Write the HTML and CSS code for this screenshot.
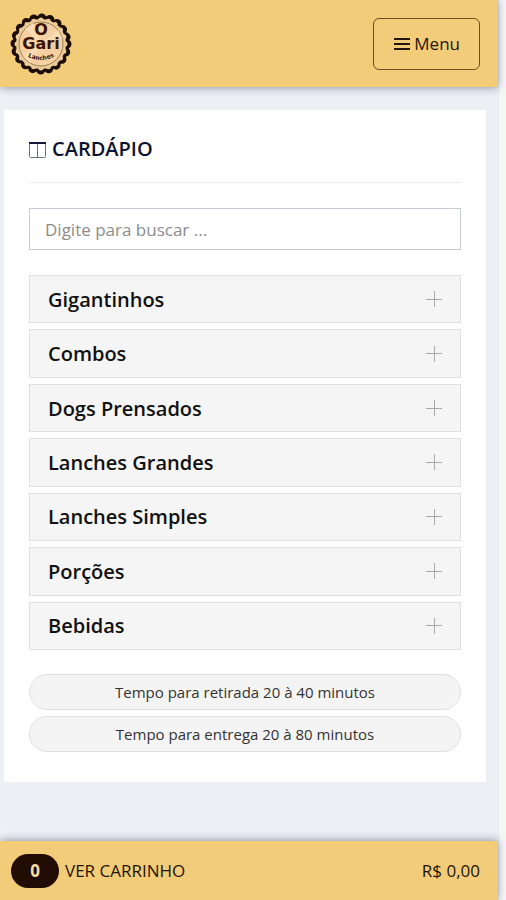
FILE: index.html
```html
<!DOCTYPE html>
<html lang="pt-BR">
<head>
    <meta charset="UTF-8">
    <meta name="viewport" content="width=device-width, initial-scale=1.0">
    <title>O Gari Lanches</title>
    <link rel="stylesheet" href="styles.css">
</head>
<body>
    <div class="page">
        <header class="header">
            <a href="#" class="logo" aria-label="O Gari Lanches">
                <svg width="62" height="62" viewBox="0 0 62 62">
                    <!-- Scalloped seal -->
                    <circle class="scallop" cx="31" cy="31" r="26" stroke="#1c0d06" stroke-width="9"/>
                    <circle cx="31" cy="31" r="28" fill="#1c0d06"/>
                    <circle class="scallop" cx="31" cy="31" r="24" stroke="#eccb95" stroke-width="5" pathLength="163.4"/>
                    <circle cx="31" cy="31" r="25" fill="#eccb95"/>
                    <circle cx="31" cy="31" r="22" fill="#f6d0a0" stroke="#99805a" stroke-width="1"/>
                    <path d="M31 31L15 16L23 10ZM31 31L48 17L52 25ZM31 31L13 43L20 50Z" fill="#f9dcb4"/>
                    <path id="arc" d="M15 42Q31 52 47 42" fill="none"/>
                    <text class="logo-name" x="31" y="22">O</text>
                    <text class="logo-name" x="31" y="36">Gari</text>
                    <text class="logo-sub"><textPath href="#arc" startOffset="50%">Lanches</textPath></text>
                </svg>
            </a>
            <button type="button" class="menu-button">
                <svg width="16" height="14" viewBox="0 0 16 14">
                    <path d="M0 2H16M0 7H16M0 12H16" stroke="#24150a" stroke-width="2"/>
                </svg>
                Menu
            </button>
        </header>

        <main class="content">
            <section class="card">
                <h1 class="title">
                    <svg width="18" height="18" viewBox="0 0 18 18" fill="none">
                        <rect x="0.5" y="2.5" width="16" height="15" rx="1" stroke="#6b7080"/>
                        <path d="M8.5 3V17" stroke="#6b7080"/>
                        <path d="M0 3H17" stroke="#14193a" stroke-width="2"/>
                    </svg>
                    CARDÁPIO
                </h1>

                <input type="search" class="search" placeholder="Digite para buscar ..." aria-label="Digite para buscar">

                <div class="categories">
                    <button type="button" class="category">Gigantinhos <span class="plus"></span></button>
                    <button type="button" class="category">Combos <span class="plus"></span></button>
                    <button type="button" class="category">Dogs Prensados <span class="plus"></span></button>
                    <button type="button" class="category">Lanches Grandes <span class="plus"></span></button>
                    <button type="button" class="category">Lanches Simples <span class="plus"></span></button>
                    <button type="button" class="category">Porções <span class="plus"></span></button>
                    <button type="button" class="category">Bebidas <span class="plus"></span></button>
                </div>

                <div class="times">
                    <p class="time">Tempo para retirada 20 à 40 minutos</p>
                    <p class="time">Tempo para entrega 20 à 80 minutos</p>
                </div>
            </section>
        </main>

        <footer class="cart">
            <a href="#" class="cart-link"><span class="cart-count">0</span> VER CARRINHO</a>
            <span>R$ 0,00</span>
        </footer>
    </div>
</body>
</html>
```
FILE: styles.css
```css
* {
    box-sizing: border-box;
}

body {
    margin: 0;
    padding-right: 7px;
    font-family: "Open Sans", sans-serif;
    color: #24150a;
    background: #f6f6f7;
}

.page {
    display: flex;
    flex-direction: column;
    min-height: 100vh;
    background: #ecf0f4;
    border-right: 1px solid #e6e9ec;
}

.header {
    display: flex;
    align-items: center;
    justify-content: space-between;
    height: 87px;
    padding: 0 18px 0 10px;
    background: #f2cc79;
    box-shadow: 0 1px 8px rgba(40, 45, 80, 0.45);
}

.logo svg {
    display: block;
}

.scallop {
    fill: none;
    stroke-linecap: round;
    stroke-dasharray: 0 8.17;
}

.logo-name {
    font-family: "DejaVu Sans", Verdana, sans-serif;
    font-size: 16px;
    font-weight: bold;
    text-anchor: middle;
    fill: #3a1408;
}

.logo-sub {
    font-family: "DejaVu Sans", Verdana, sans-serif;
    font-size: 6px;
    font-weight: bold;
    text-anchor: middle;
    fill: #3a1408;
}

.menu-button {
    display: flex;
    align-items: center;
    gap: 4px;
    height: 52px;
    padding: 0 19px 0 20px;
    font: 17px "Open Sans", sans-serif;
    color: #24150a;
    background: none;
    border: 1px solid #6b4f20;
    border-radius: 6px;
    cursor: pointer;
}

.content {
    flex: 1;
    padding: 23px 12px 24px 4px;
}

.card {
    padding: 25px 25px 30px;
    background: #fff;
}

.title {
    display: flex;
    align-items: center;
    gap: 5px;
    margin: 0 0 25px;
    padding-bottom: 19px;
    font-size: 20px;
    font-weight: 600;
    line-height: 28px;
    color: #0c1230;
    border-bottom: 1px solid #ebebee;
}

.search {
    display: block;
    width: 100%;
    height: 42px;
    margin: 0 0 25px;
    padding: 0 15px;
    font: 17px "Open Sans", sans-serif;
    color: #333;
    background: #fff;
    border: 1px solid #c9cad9;
    border-radius: 0;
    appearance: none;
}

.search::placeholder {
    color: #8c8c8c;
}

.categories {
    display: flex;
    flex-direction: column;
    gap: 6px;
    min-height: 375px;
}

.category {
    display: flex;
    flex: 1;
    align-items: center;
    justify-content: space-between;
    padding: 0 18px;
    font: 600 20px "Open Sans", sans-serif;
    color: #111;
    background: #f5f5f5;
    border: 1px solid #dfdfdf;
    cursor: pointer;
}

.plus {
    width: 16px;
    height: 16px;
    background:
        linear-gradient(#a8a8a8, #a8a8a8) center / 16px 1px no-repeat,
        linear-gradient(#a8a8a8, #a8a8a8) center / 1px 16px no-repeat;
}

.times {
    display: flex;
    flex-direction: column;
    gap: 6px;
    margin-top: 24px;
}

.time {
    margin: 0;
    padding: 6px 0;
    font-size: 15px;
    line-height: 22px;
    text-align: center;
    color: #333;
    background: #f4f4f4;
    border: 1px solid #dfdfdf;
    border-radius: 20px;
}

.cart {
    position: sticky;
    bottom: 0;
    display: flex;
    align-items: center;
    justify-content: space-between;
    height: 59px;
    padding: 0 18px 0 11px;
    font-size: 17px;
    background: #f2cc79;
    box-shadow: 0 -1px 8px rgba(40, 45, 80, 0.45);
}

.cart-link {
    display: flex;
    align-items: center;
    gap: 6px;
    color: inherit;
    text-decoration: none;
}

.cart-count {
    width: 48px;
    font-weight: bold;
    line-height: 34px;
    text-align: center;
    color: #f8dda5;
    background: #210c04;
    border-radius: 17px;
}
```
